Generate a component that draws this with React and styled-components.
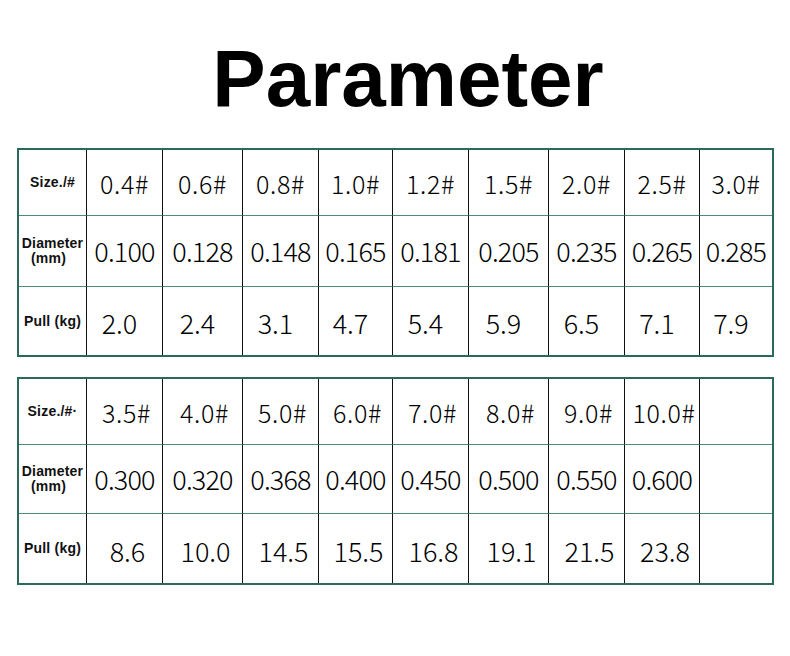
import React from "react";
import styled, { createGlobalStyle } from "styled-components";

const Global = createGlobalStyle`
  html, body { margin: 0; padding: 0; background: #fff; }
  body { width: 790px; height: 656px; overflow: hidden; }
`;

const Page = styled.div`
  width: 790px;
  height: 656px;
  background: #fff;
  display: flex;
  flex-direction: column;
`;

const Title = styled.h1`
  margin: 0;
  padding: 39px 0 0 26px;
  text-align: center;
  font-family: "Liberation Sans", Arial, sans-serif;
  font-weight: 700;
  font-size: 80px;
  line-height: 80px;
  color: #000;
`;

const Table = styled.div`
  margin-left: 17px;
  margin-top: ${(p) => p.$top}px;
  width: 757px;
  box-sizing: border-box;
  border: 2px solid #2b6a5b;
  display: grid;
  grid-template-columns: 67px 76px 80px 76px 74px 76px 80px 76px 75px 73px;
  grid-template-rows: ${(p) => p.$rows};
`;

const Cell = styled.div`
  box-sizing: border-box;
  border-left: ${(p) => (p.$first ? "none" : "1px solid #111")};
  border-top: ${(p) => (p.$topRow ? "none" : "1px solid #4f8a7c")};
  display: flex;
  align-items: center;
  justify-content: center;
  padding-left: ${(p) => (p.$dx > 0 ? p.$dx * 2 : 0)}px;
  padding-right: ${(p) => (p.$dx < 0 ? -p.$dx * 2 : 0)}px;
  padding-top: ${(p) => (p.$dy > 0 ? p.$dy * 2 : 0)}px;
  padding-bottom: ${(p) => (p.$dy < 0 ? -p.$dy * 2 : 0)}px;
`;

const Value = styled.span`
  font-family: "Noto Sans CJK SC", "Noto Sans", sans-serif;
  font-weight: 300;
  font-size: ${(p) => p.$size}px;
  letter-spacing: ${(p) => p.$ls}px;
  color: #000;
  line-height: 1;
  white-space: nowrap;
`;

const Label = styled.span`
  font-family: "Liberation Sans", Arial, sans-serif;
  font-weight: 700;
  font-size: 14px;
  line-height: 15px;
  letter-spacing: 0.2px;
  color: #111;
  text-align: center;
  white-space: nowrap;
`;

const Sub = styled.span`
  display: block;
  padding-right: 8px;
`;

const rowsA = [
  {
    label: <Label>Size./#</Label>,
    size: 25,
    ls: 0.6,
    dy: 1,
    dx: 0,
    values: ["0.4#", "0.6#", "0.8#", "1.0#", "1.2#", "1.5#", "2.0#", "2.5#", "3.0#"],
  },
  {
    label: (
      <Label>
        Diameter
        <Sub>(mm)</Sub>
      </Label>
    ),
    size: 27,
    ls: -0.8,
    dy: -1,
    dx: 0,
    values: ["0.100", "0.128", "0.148", "0.165", "0.181", "0.205", "0.235", "0.265", "0.285"],
  },
  {
    label: <Label>Pull (kg)</Label>,
    size: 27,
    ls: 0,
    dy: 1,
    dx: -5,
    values: ["2.0", "2.4", "3.1", "4.7", "5.4", "5.9", "6.5", "7.1", "7.9"],
  },
];

const rowsB = [
  {
    label: <Label>Size./#·</Label>,
    size: 25,
    ls: 0.6,
    dy: 1,
    dx: 2,
    values: ["3.5#", "4.0#", "5.0#", "6.0#", "7.0#", "8.0#", "9.0#", "10.0#", ""],
  },
  {
    label: (
      <Label>
        Diameter
        <Sub>(mm)</Sub>
      </Label>
    ),
    size: 27,
    ls: -0.8,
    dy: -1,
    dx: 0,
    values: ["0.300", "0.320", "0.368", "0.400", "0.450", "0.500", "0.550", "0.600", ""],
  },
  {
    label: <Label>Pull (kg)</Label>,
    size: 27,
    ls: 0,
    dy: 2,
    dx: 3,
    values: ["8.6", "10.0", "14.5", "15.5", "16.8", "19.1", "21.5", "23.8", ""],
  },
];

function ParamTable({ rows, top, heights }) {
  return (
    <Table $top={top} $rows={heights}>
      {rows.map((row, r) => (
        <React.Fragment key={r}>
          <Cell $first $topRow={r === 0} $dx={0} $dy={0}>
            {row.label}
          </Cell>
          {row.values.map((v, i) => (
            <Cell key={i} $topRow={r === 0} $dx={row.dx} $dy={row.dy}>
              <Value $size={row.size} $ls={row.ls}>
                {v}
              </Value>
            </Cell>
          ))}
        </React.Fragment>
      ))}
    </Table>
  );
}

export default function App() {
  return (
    <Page>
      <Global />
      <Title>Parameter</Title>
      <ParamTable rows={rowsA} top={29} heights="65px 71px 69px" />
      <ParamTable rows={rowsB} top={20} heights="65px 69px 70px" />
    </Page>
  );
}
